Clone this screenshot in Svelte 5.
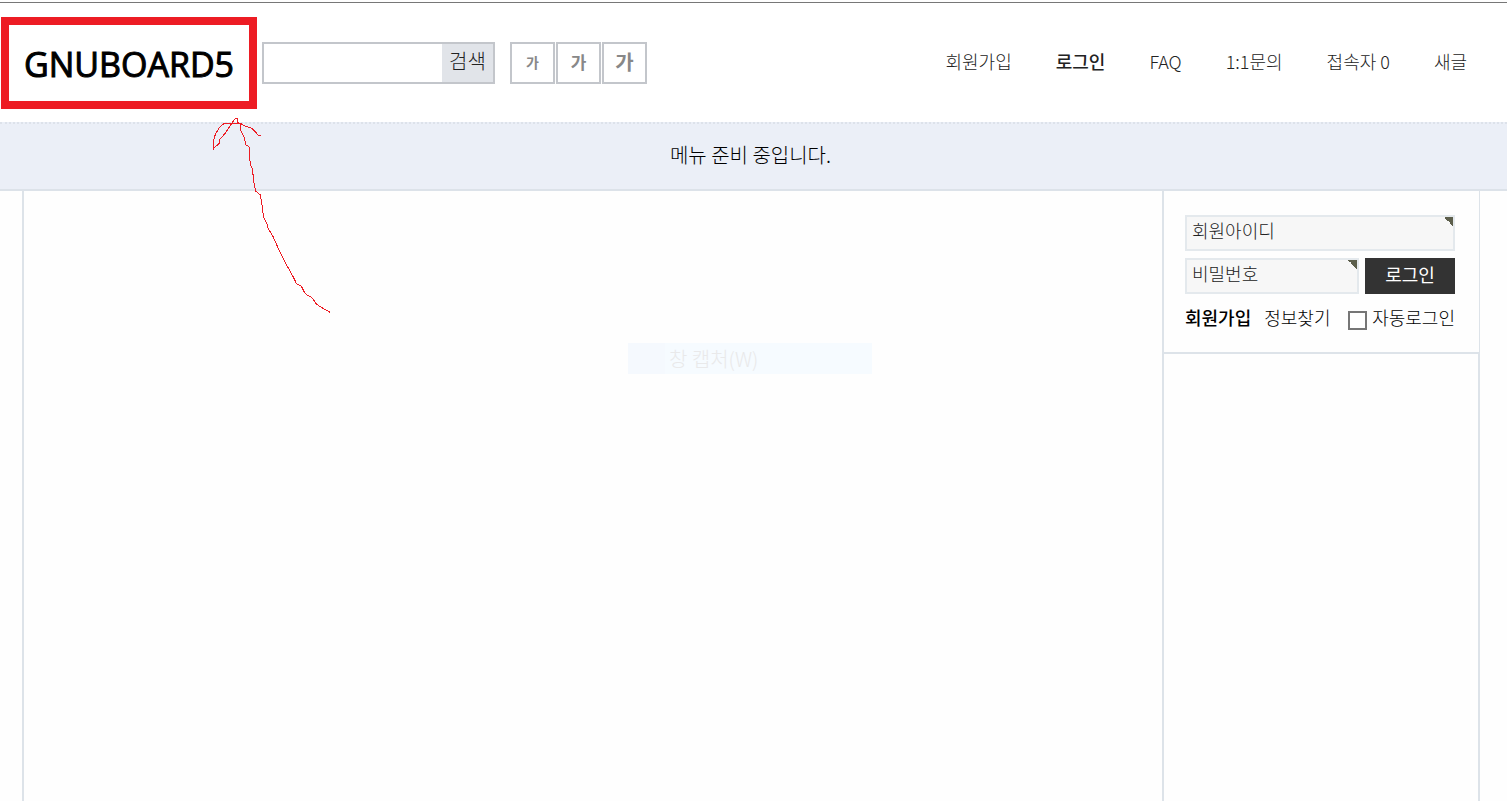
<script>
  const links = [
    { label: "회원가입" },
    { label: "로그인", strong: true },
    { label: "FAQ" },
    { label: "1:1문의" },
    { label: "접속자 0" },
    { label: "새글" },
  ];
  const sizes = ["small", "medium", "large"];

  let keyword = $state("");
  let userId = $state("");
  let password = $state("");
  let autoLogin = $state(false);
</script>

<div class="page">
  <header>
    <a class="logo" href="#home">GNUBOARD5</a>
    <form class="search" onsubmit={(e) => e.preventDefault()}>
      <input type="text" aria-label="검색어" bind:value={keyword} />
      <button type="submit">검색</button>
    </form>
    <div class="text-size">
      {#each sizes as size}
        <button type="button" class={size}>가</button>
      {/each}
    </div>
    <ul class="links">
      {#each links as link}
        <li><a href="#top" class:strong={link.strong}>{link.label}</a></li>
      {/each}
    </ul>
  </header>

  <nav>메뉴 준비 중입니다.</nav>

  <div class="wrapper">
    <main></main>
    <aside>
      <form class="login" onsubmit={(e) => e.preventDefault()}>
        <input
          class="field"
          type="text"
          aria-label="회원아이디"
          placeholder="회원아이디"
          bind:value={userId}
        />
        <div class="row">
          <input
            class="field"
            type="password"
            aria-label="비밀번호"
            placeholder="비밀번호"
            bind:value={password}
          />
          <button type="submit">로그인</button>
        </div>
        <div class="options">
          <a class="join" href="#join">회원가입</a>
          <a href="#find">정보찾기</a>
          <label>
            <input type="checkbox" bind:checked={autoLogin} />
            자동로그인
          </label>
        </div>
      </form>
      <div class="rest"></div>
    </aside>
  </div>

  <!-- fading context menu item -->
  <div class="menu-item">창 캡처(W)</div>

  <!-- hand drawn arrow pointing at the logo -->
  <svg class="arrow" viewBox="0 0 450 660" aria-hidden="true">
    <path
      d="M390 622L380 616L362 606L350 598L342 586L335 577L320 570L311 558L304 543L290 537L280 516L262 484L240 442L218 392L204 370L202 358L190 335L187 305L181 270L167 258L162 235L157 190L151 180L147 125L138 120L132 95L122 75L121 55L113 53V40H106L97 52L75 86L59 103L57 116L40 130V136V110L46 88L58 68L70 57L76 55H121L135 63L155 70L166 80L173 90L183 92"
    />
  </svg>
</div>

<style>
  :global(body) {
    margin: 0;
    background: #fefefe;
  }

  .page {
    position: relative;
    display: flex;
    flex-direction: column;
    min-height: 100vh;
    box-sizing: border-box;
    padding-top: 2px;
    color: #000;
    font-family: "Noto Sans CJK KR", sans-serif;
    font-size: 18px;
    font-weight: 300;
    line-height: 24px;
  }

  a {
    color: inherit;
    text-decoration: none;
  }

  input,
  button {
    box-sizing: border-box;
    margin: 0;
    border-radius: 0;
    color: #222;
    font: inherit;
  }

  header {
    display: flex;
    align-items: flex-start;
    padding: 14px 40px 13px 1px;
    border-top: 1px solid #777;
    background: #fff;
  }

  .logo {
    box-sizing: border-box;
    width: 256px;
    height: 92px;
    border: 8px solid #ed1c24;
    font-family: "Open Sans", sans-serif;
    font-size: 34px;
    font-weight: 500;
    line-height: 78px;
    text-align: center;
    -webkit-text-stroke: 1px #000;
  }

  .search {
    display: flex;
    box-sizing: border-box;
    width: 233px;
    height: 42px;
    margin: 25px 15px 0 5px;
    border: 2px solid #c3c6cb;
  }

  .search input {
    flex: 1;
    min-width: 0;
    padding: 0 6px;
    border: 0;
    background: #fff;
  }

  .search button {
    width: 51px;
    padding: 0 0 4px;
    border: 0;
    background: #e1e4e9;
    font-size: 20px;
  }

  .text-size {
    display: flex;
    gap: 1px;
    margin-top: 25px;
  }

  .text-size button {
    width: 45px;
    height: 42px;
    padding: 0 0 2px;
    border: 2px solid #c3c6cb;
    background: #fff;
    color: #888;
    font-weight: 700;
  }

  .text-size .small {
    font-size: 14px;
  }

  .text-size .medium {
    font-size: 17px;
  }

  .text-size .large {
    font-size: 20px;
  }

  .links {
    display: flex;
    gap: 44px;
    margin: 32px 0 0 auto;
    padding: 0;
    color: #222;
    list-style: none;
  }

  .strong,
  .join {
    font-weight: 500;
  }

  nav {
    padding: 19px 6px 22px 0;
    border-top: 2px dotted #dde2ea;
    border-bottom: 2px solid #dce2e9;
    background: #ebeff7;
    font-size: 20px;
    text-align: center;
  }

  .wrapper {
    display: flex;
    flex: 1;
    margin: 0 27px 0 22px;
  }

  main {
    flex: 1;
    border-left: 2px solid #dde3e9;
  }

  aside {
    display: flex;
    flex-direction: column;
    box-sizing: border-box;
    width: 318px;
    border-left: 2px solid #dde3e9;
  }

  .login {
    display: flex;
    flex-direction: column;
    gap: 7px;
    padding: 24px 24px 22px 21px;
    border-right: 1px solid #dde3e9;
    border-bottom: 2px solid #dde3e9;
  }

  .rest {
    flex: 1;
    border-right: 2px solid #dde3e9;
  }

  .field {
    flex: 1;
    min-width: 0;
    height: 36px;
    flex-basis: auto;
    padding: 0 5px 6px;
    border: 2px solid #e4e9ed;
    /* required mark in the corner */
    background: linear-gradient(to bottom left, #5d5f4c 50%, transparent 50%)
      no-repeat top right / 9px 9px #f7f7f7;
  }

  .field::placeholder {
    color: #222;
    opacity: 1;
  }

  .row {
    display: flex;
    gap: 6px;
  }

  .row .field {
    width: 100px;
  }

  .row button {
    width: 90px;
    padding: 0 0 4px;
    border: 0;
    background: #333;
    color: #fff;
    font-weight: 400;
  }

  .options {
    display: flex;
    gap: 13px;
    padding-top: 4px;
    white-space: nowrap;
  }

  .options label {
    display: flex;
    gap: 5px;
    margin-left: auto;
  }

  .options input {
    appearance: none;
    width: 19px;
    height: 19px;
    margin-top: 6px;
    border: 2px solid #767676;
    background: #fff;
  }

  .options input:checked {
    background: #767676;
  }

  .menu-item {
    position: absolute;
    top: 343px;
    left: 628px;
    box-sizing: border-box;
    width: 244px;
    height: 31px;
    padding-left: 41px;
    background: linear-gradient(to right, #f5f9fe 37px, #f6fbff 37px);
    color: #e9e9ea;
    font-size: 20px;
    line-height: 31px;
  }

  .arrow {
    position: absolute;
    top: 105px;
    left: 200px;
    width: 150px;
    height: 220px;
    fill: none;
    stroke: #ed1c24;
    stroke-width: 3;
    pointer-events: none;
    shape-rendering: crispEdges;
  }
</style>
